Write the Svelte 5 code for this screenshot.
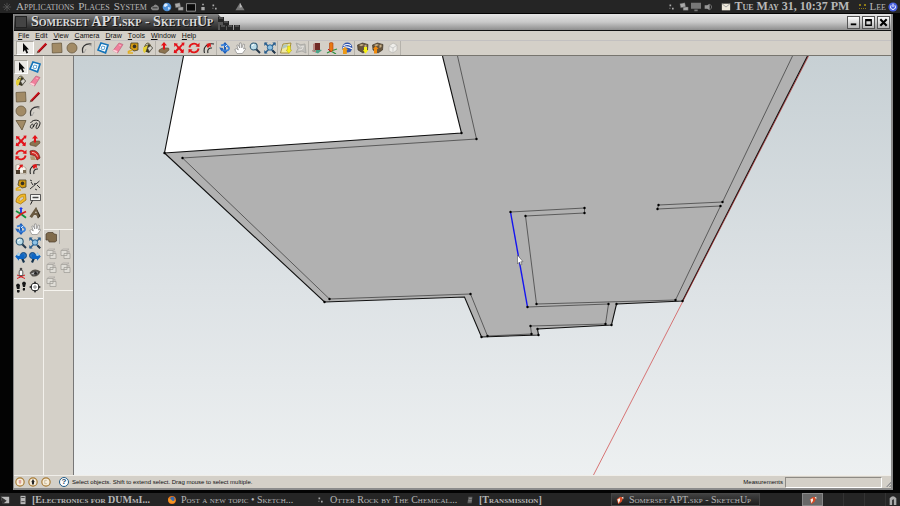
<script>
  const menus = ['File', 'Edit', 'View', 'Camera', 'Draw', 'Tools', 'Window', 'Help'];

  const toolbar = [
    ['select', 'pencil', 'rect', 'circle', 'arc'],
    ['component', 'eraser', 'tape', 'paint'],
    ['pushpull', 'move', 'rotate', 'offset'],
    ['orbit', 'hand', 'zoom', 'extents'],
    ['addloc', 'terrain'],
    ['building', 'place', 'earth'],
    ['getmodel', 'sharemodel', 'ghostbox']
  ];

  const palette = [
    ['select', 'component', 'paint', 'eraser'],
    ['rect', 'pencil', 'circle', 'arc', 'poly', 'freehand'],
    ['move', 'pushpull', 'rotate', 'follow', 'scale', 'offset'],
    ['tape', 'dimension', 'protractor', 'label', 'axes', 'text3d'],
    ['orbit', 'hand', 'zoom', 'extents', 'previous', 'next'],
    ['camera', 'look', 'walk', 'section']
  ];

  const solids = ['solid', 'solid', 'solid', 'solid', 'solid'];

  const tasks = [
    { icon: 'doc', text: '[Electronics for DUMmI...', strong: true },
    { icon: 'firefox', text: 'Post a new topic • Sketch...' },
    { icon: 'dots', text: 'Otter Rock by The Chemical...' },
    { icon: 'trans', text: '[Transmission]', strong: true },
    { icon: 'sketchup', text: 'Somerset APT.skp - SketchUp', active: true }
  ];

  const cubes = [[0, 3], [5, 7], [2, 11], [9, 11], [16, 11]];

  const points = [
    [165, 153], [183, 158], [462, 133], [477, 139], [325, 302], [330, 299], [471, 294],
    [482, 337], [488, 336], [532, 334], [539, 335], [538, 329], [531, 326], [606, 324],
    [612, 325], [609, 304], [617, 304], [537, 304], [528, 307], [511, 212], [526, 216],
    [585, 208], [585, 213], [659, 205], [658, 209], [723, 202], [721, 206], [676, 300], [683, 301]
  ];
</script>

{#snippet icon(name)}
  <svg class="icon" viewBox="0 0 12 12" aria-hidden="true">
    {#if name === 'select'}
      <path d="M4 1v9l2-2 1.5 3.5 1.6-.7L7.6 7.4H10z" fill="#080808" />
    {:else if name === 'pencil'}
      <path d="M2 10.3 10.3 1.6" stroke="#c90d16" stroke-width="2.3" />
      <path d="M3 10 10.5 2.4" stroke="#68151b" stroke-width=".7" />
      <path d="M.6 11.5 1.5 8.8 3.3 10.4z" fill="#6c6150" />
    {:else if name === 'rect'}
      <path d="M1 1.5 10.5 1 11 10.5 1.4 11z" fill="#a28b66" stroke="#6b5c42" stroke-width=".8" />
    {:else if name === 'circle'}
      <circle cx="6" cy="6" r="5" fill="#a28b66" stroke="#6b5c42" stroke-width=".8" />
    {:else if name === 'poly'}
      <path d="M1 1.5h10L7 11z" fill="#a28b66" stroke="#625337" stroke-width=".8" />
    {:else if name === 'arc'}
      <path d="M2 11C0 5 4 1 10.5 2" fill="none" stroke="#333" stroke-width="1.2" />
      <path d="M3 11 5 7M8 3l3 1" stroke="#999" stroke-width=".7" />
    {:else if name === 'freehand'}
      <path d="M1.5 4C4-.5 13 .5 10.6 6 8 12.4 5.8 9.5 8 5.800 9.300 3 6 3 4.800 7c-1 3.400-4.800 2.500-3-.5C3.400 4 5.200 5.500 4 8" fill="none" stroke="#222" />
    {:else if name === 'component'}
      <path d="M4 1 11 3 8.5 10.8 1 8z" fill="#fff" stroke="#1674b8" stroke-width="1.7" />
      <path d="m5 4 3 .7-1 3L4 7z" fill="#fff" stroke="#60a5d3" />
    {:else if name === 'eraser'}
      <path d="M7 1 11 2.5 5.5 11 1 8.5z" fill="#f07f9b" stroke="#b9647c" stroke-width=".7" />
      <path d="M1.5 7.4 5.5 9 5 11 1 9z" fill="#ffd1d9" />
      <path d="m7 3 2 .8" stroke="#ffc3cf" stroke-width=".7" />
    {:else if name === 'paint'}
      <path d="M2 4.5 7 2l4 4-4 5-5-2z" fill="#3a3624" />
      <path d="M1 5.5 6 3 4 9 2.5 11.2 1 9z" fill="#e5cf35" />
      <path d="M3 4C4 0 8 0 9 5" fill="none" stroke="#5e5631" />
      <path d="m5.500 6 3-2 2 2-3 3.500z" fill="#d9d7ce" stroke="#555" stroke-width=".5" />
    {:else if name === 'tape'}
      <path d="M4 1h7v7L7 9 3 6z" fill="#d39a12" stroke="#4a4024" stroke-width=".8" />
      <circle cx="7.5" cy="4.4" r="1.8" fill="#373224" />
      <path d="M5 8 1.5 9.5V11H6" fill="none" stroke="#e0af24" stroke-width="1.6" />
    {:else if name === 'pushpull'}
      <path d="m1 8 3.5-2h6L11 8l-4 3.5L1 10z" fill="#8b7350" stroke="#574731" stroke-width=".6" />
      <path d="M6 0 9 3.5H7V7.5H5V3.5H3z" fill="#e51117" />
    {:else if name === 'move'}
      <path d="m1 1 4 .8-1 1L6 4.7l3-3L8.2.8 11.5.5 11 4l-1-1-2.5 3L9.6 8l1.4-1-.5 4.2L7 10.6l1-1L6 7.5 3.5 10l1 1.2L.7 11l.5-3.6 1 1L4.5 6 2.8 3.6 1.4 5z" fill="#e31019" />
    {:else if name === 'rotate'}
      <path d="M1.4 5.5A4.7 4.7 0 0 1 9.4 3M10.6 6.5A4.7 4.7 0 0 1 2.6 9" fill="none" stroke="#e21518" stroke-width="1.8" />
      <path d="M11.5.7V5L7.5 4.4zM.5 11.3V7l4 .6z" fill="#e21518" />
    {:else if name === 'offset'}
      <path d="M1.5 11C-.2 5 4 .8 11 2M5 11C4 7.5 6 5.6 9 6" fill="none" stroke="#282828" stroke-width="1.1" />
      <path d="m3 2 4.5-1 .6 4-1.5-.8L5 6 3.6 4.5 4.4 3z" fill="#e21518" />
    {:else if name === 'follow'}
      <path d="M1 2c5-2 9 1 10 7l-3 2C7 7 5 6 1.5 6z" fill="#d32c26" stroke="#642018" stroke-width=".7" />
      <path d="M1 7.5 5 7l2 4H2z" fill="#b19a74" />
      <path d="M3 3.5c3 0 4.5 1.5 5.5 4" fill="none" stroke="#ffe2d5" stroke-width=".8" />
    {:else if name === 'scale'}
      <path d="m1 2 4-1 6 4v6L5 10 1 8z" fill="#f5f2eb" stroke="#938774" stroke-width=".6" />
      <path d="M1 7h4v4H1z" fill="#473a2a" />
      <path d="m4 2 4-.6L7.4 5 6.2 4 4 7 3 6l2-3z" fill="#dc1719" />
      <path d="M8 7h3v3H8z" fill="#796b54" />
    {:else if name === 'dimension'}
      <path d="M1 10 10.5 2M2 3l2 3M8 6l3 3M1 1l2 1M6 10l2 1" stroke="#333" fill="none" />
      <path d="M5 4h2v2H5z" fill="#555" />
    {:else if name === 'protractor'}
      <path d="M1 9C1 4 5 .5 10.5 1.2L11 7 5.5 11z" fill="#efb827" stroke="#9d6800" stroke-width=".7" />
      <path d="M3.8 7.5C4.5 5 6 3.8 8.5 3.7v2L5.4 8z" fill="#d4d0c8" stroke="#b17d0c" stroke-width=".5" />
    {:else if name === 'label'}
      <path d="M1.500 1.500h10v6h-10z" fill="#f5f5f2" stroke="#333" stroke-width=".8" />
      <path d="M3.500 4.500h6" stroke="#444" stroke-width="1.500" />
      <path d="M3.500 7.500 1.500 11.500" stroke="#222" />
    {:else if name === 'axes'}
      <path d="M6 7V1" stroke="#1837ed" stroke-width="1.8" />
      <path d="m6 7-5-3M6 7l5 3.800" stroke="#10913b" stroke-width="1.8" />
      <path d="M6 7 1 11M6 7l5-2.500" stroke="#d61b21" stroke-width="1.8" />
      <path d="m4 2 2-2 2 2z" fill="#1837ed" />
    {:else if name === 'text3d'}
      <path d="M7 0 11.500 9 9 11.500 7.500 8H5l3-3z" fill="#2e271d" />
      <path d="M7 0 .5 9.500 3 11l2-3h2.500L9 11.500 10 9 7.500 1z" fill="#6a5a41" />
      <path d="m6 6 1-2 .7 2z" fill="#d4d0c8" />
    {:else if name === 'orbit'}
      <path d="M6 0 8.5 3H7v6h1.4L6 12 3.5 9H5V3H3.5z" fill="#1d5cb4" />
      <path d="M2 3.5C5 2 10.5 4 10 7 9 9.5 4 9 2 7" fill="none" stroke="#3980da" stroke-width="1.8" />
      <path d="m.2 5.5 4 .5-1.4 3.4z" fill="#2866bd" />
      <path d="m6 5 2-2" stroke="#d9e8ff" />
    {:else if name === 'hand'}
      <path d="M3 11.500.8 7.500l1.700-.8L4.300 8 2.800 3.300l1.400-.4L5.800 6l-.2-5 1.500-.1.700 5L9.300 2l1.300.5L9.600 7l1.500-1 .7.800-3.500 4.700z" fill="#fff" stroke="#777" stroke-width=".6" />
    {:else if name === 'zoom'}
      <path d="m7 7 4 4" stroke="#26384a" stroke-width="2" />
      <circle cx="4.7" cy="4.5" r="3.5" fill="#bcdde9" stroke="#2d5874" stroke-width="1.1" />
      <path d="M3 4q.6-1.5 2-1.5" stroke="#fff" fill="none" />
    {:else if name === 'extents'}
      <path d="M1 1 11 11M11 1 1 11" stroke="#2b5f8e" stroke-width="1.500" />
      <path d="M.3.500h3.400L.3 4zM11.700.500H8.300L11.700 4zM.3 11.500h3.400L.3 8z" fill="#2b5f8e" />
      <circle cx="6" cy="5.500" r="2.700" fill="#8fc3e6" stroke="#2b6797" />
      <path d="m8.500 8.500 2.700 2.700" stroke="#26384a" stroke-width="2" />
    {:else if name === 'previous' || name === 'next'}
      <g transform={name === 'next' ? 'translate(12 0) scale(-1 1)' : ''}>
        <path d="m7 7 2 4.500" stroke="#16334d" stroke-width="2.200" />
        <circle cx="8.500" cy="4.500" r="3" fill="#2672c0" stroke="#174a80" />
        <path d="M.2 5.500 4 1.500v2h5V8H4v1.800z" fill="#0d65c4" />
        <circle cx="3.500" cy="3.500" r="1.500" fill="#a9d3ea" />
      </g>
    {:else if name === 'camera'}
      <path d="m2 8 8 3.5M10 8l-8 3.5" stroke="#d71f24" />
      <path d="M4.2 8.5V4.8Q4.2 3 6 3t1.8 1.8v3.7z" fill="#fff" stroke="#333" stroke-width=".8" />
      <circle cx="6" cy="2" r="1.3" fill="#444" />
    {:else if name === 'look'}
      <path d="M.5 6Q5 0 11.5 4.5 9 11 3 9.2z" fill="#55514a" />
      <path d="M2 6q4-3 8-.5-3 4-7 2.2" fill="#bbb" stroke="#222" stroke-width=".7" />
      <circle cx="6.5" cy="6.2" r="1.5" fill="#222" />
    {:else if name === 'walk'}
      <path d="M1 4Q3 1 5 4L4.500 8H2zM2 9h2.600v2Q3 12.500 2 11zM7 2Q9-1 11 2L10 6H8zM8 7h2v2Q9 10.500 7.700 9z" fill="#151515" />
    {:else if name === 'section'}
      <circle cx="6" cy="6" r="4" fill="#fff" stroke="#333" />
      <path d="M6 0 8 3H4zM6 12l2-3H4zM0 6l3-2v4zM12 6 9 4v4z" fill="#333" />
      <path d="M4 6h4M6 4v4" stroke="#888" />
    {:else if name === 'addloc'}
      <path d="m3 2 8-1-2 10H.5z" fill="#f0e8a2" stroke="#947b26" stroke-width=".8" />
      <path d="m3 3 5-1-1 3-5 2z" fill="#b1c6bf" />
      <path d="M7.5 4h3v4h1.3L9 11.5 6 8h1.5z" fill="#f5ef18" stroke="#a79b13" stroke-width=".4" />
    {:else if name === 'terrain'}
      <path d="M1 1q5 3 9 1l1 9-4-2-6 1.5 2-4z" fill="#c0bfbb" stroke="#a5a4a0" stroke-width=".8" />
      <path d="m3 3 2.500 2L8.500 4 7 7.500 3.500 8" fill="none" stroke="#e3e1dc" />
    {:else if name === 'building'}
      <path d="m1 9 4-2 6 1-4 3.5z" fill="#49a286" />
      <path d="M4 1h5v7H4z" fill="#702a25" />
      <path d="m4 1-2 1v6l2 1zM1 8h4v2H2z" fill="#b98a84" />
    {:else if name === 'place'}
      <path d="M5 9 1 11M5 9l6-2M5 9l5 3" stroke="#2e9242" stroke-width="1.3" />
      <path d="M3.5 1Q5 0 7 1v7L5.5 9.8 3.5 8z" fill="#e87812" stroke="#a93c0d" stroke-width=".6" />
      <path d="m2 7 3 3" stroke="#c51a1d" />
    {:else if name === 'earth'}
      <circle cx="6.3" cy="5.6" r="5" fill="#3256ae" />
      <path d="M2.500 3.800q4-2.500 7.500 0M2 6q4-2.500 9 .8" fill="none" stroke="#fff" stroke-width="1.1" />
      <path d="M2 12V8H.8L4 4.800 7 8H5.800v4z" fill="#ed9a16" />
    {:else if name === 'getmodel' || name === 'sharemodel'}
      <path d="m.5 3 5-2L11 2.5 10.5 8 6 11 1 8z" fill="#66543b" stroke="#352b20" stroke-width=".6" />
      <path d="m2 3 3-1 2 1-3 1.3zM7.5 3l2-.5V5l-2 1z" fill="#c4ad85" />
      {#if name === 'getmodel'}
        <path d="M7 5h3v3h1.2L8.5 11.7 6 8h1z" fill="#f6f214" />
      {:else}
        <path d="M2 11.5V7H1l2.7-3L6.5 7H5v4.5z" fill="#f08a0c" />
      {/if}
    {:else if name === 'ghostbox'}
      <path d="m2 4 4-3 4 2v5l-4 3-4-2z" fill="#eeede9" stroke="#b8b6b0" stroke-width=".7" />
      <path d="m2 4 4 2 4-3M6 6v5" fill="none" stroke="#bbb" stroke-width=".7" />
    {:else if name === 'solid'}
      <path d="M2 2.5h6v5H2zM5 5.5h6v5H5z" fill="#dfddd7" stroke="#9b9994" stroke-width=".7" />
      <path d="M2 2.5 4 1h6L8 2.5M8 4l2-1v2.5" fill="none" stroke="#aaa8a3" stroke-width=".7" />
    {:else if name === 'shell'}
      <path d="m1 3 2-1.5h5L9 3l2.5.5V10L10 11H4L3.5 9H1z" fill="#806b4c" stroke="#4c3e2b" stroke-width=".7" />
    {:else if name === 'doc'}
      <path d="M3 1h6v10H3z" fill="#b9b9b9" />
      <path d="M4 3h4M4 8h4" stroke="#333" />
    {:else if name === 'firefox'}
      <circle cx="6" cy="6" r="4.7" fill="#e8731a" />
      <circle cx="6.5" cy="4.7" r="2.6" fill="#346db2" />
      <path d="M1.5 4q3 0 5 3 2 1 4-2-.4 5-5 5T1.5 4" fill="#f49724" />
    {:else if name === 'dots'}
      <path d="M3 3h2v2H3zM6 7h2v2H6zM3 7h1v1H3z" fill="#aaa" />
    {:else if name === 'trans'}
      <path d="M4 2h5l-1 8H3z" fill="#5f5f5f" />
      <path d="M5 4h3M4 7h4" stroke="#999" />
    {:else if name === 'sketchup'}
      <path d="m2 5 4-3 4 1-2 5-4 3z" fill="#d84c27" />
      <path d="m3 5 3-1v3l-2 3zM8 3l2-1v3z" fill="#f3eee5" />
    {:else if name === 'cloud'}
      <path d="M1 8q0-3 3-3 2-4 6 0 2 4-1 5H3z" fill="#858585" />
      <path d="M3 7h6" stroke="#222" />
    {:else if name === 'globe'}
      <circle cx="6" cy="6" r="5.2" fill="#4e91d9" />
      <path d="M3 2q4-1 4 2L4 6 2 5zM7 6l3 1-2 3z" fill="#dceafa" />
    {:else if name === 'cards'}
      <path d="m1 2 6-1 1 5-6 1zM5 6h6v4H5z" fill="#aaa" stroke="#555" stroke-width=".5" />
    {:else if name === 'screen'}
      <path d="M.5 2h11v9H.5z" fill="#0a0a0a" stroke="#aaa" />
    {:else if name === 'bars'}
      <path d="M5 2h2v2H5zM4 6h4v4H4z" fill="#aaa" />
    {:else if name === 'monitor'}
      <path d="M0 1h12v7H0zM4 9h4v2H4z" fill="#777" />
    {:else if name === 'speaker'}
      <path d="M2 4h3l3-2v8L5 8H2z" fill="#999" />
      <path d="M9 3q3 3 0 6" fill="none" stroke="#777" />
    {:else if name === 'mail'}
      <path d="M1 2h10v8H1z" fill="#eee9dc" />
      <path d="m1 2 5 4 5-4" fill="none" stroke="#999" />
    {:else if name === 'power'}
      <circle cx="6" cy="6" r="5.5" fill="#465fe0" />
      <path d="M3.7 4q-2 4 2.3 5 4.3-1 2.3-5M6 2v4" fill="none" stroke="#fff" stroke-width="1.2" />
    {:else if name === 'peak'}
      <path d="M6 1 11.500 10H.5z" fill="#777" />
      <path d="m6 1 2.500 5-3 1z" fill="#bbb" />
    {:else if name === 'burst'}
      <path d="M6 1v10M1 6h10M2.5 2.5l7 7M9.5 2.5l-7 7" stroke="#555" />
    {:else if name === 'desk'}
      <path d="M1 2h10v8H3z" fill="#bbb" />
      <path d="m1 2 7 5-5 4z" fill="#333" />
    {:else if name === 'trash'}
      <path d="M2 12V4q4-5 8 0v8H7V5L5 6v6z" fill="#aaa" />
    {:else if name === 'geo' || name === 'person' || name === 'credit'}
      <circle cx="6" cy="6" r="5" fill="#f7edda" stroke="#a67a35" stroke-width="1.4" />
      {#if name === 'geo'}
        <path d="M4.5 3.5h3v3L6 9 4.5 6.5z" fill="#dfa29a" />
      {:else if name === 'person'}
        <path d="M6 2.5 7.5 5 7 9H5L4.5 5z" fill="#222" />
      {:else}
        <path d="M7 4H4.5v4H7" stroke="#c4b695" fill="none" />
      {/if}
    {/if}
  </svg>
{/snippet}

<div class="desktop">
  <header class="panel top">
    <nav class="panel-menu">
      {@render icon('burst')}
      <a href="#applications">Applications</a>
      <a href="#places">Places</a>
      <a href="#system">System</a>
    </nav>
    <div class="launchers">
      {#each ['cloud', 'globe', 'cards', 'screen', 'bars', 'dots'] as name}{@render icon(name)}{/each}
    </div>
    <div class="peak">{@render icon('peak')}</div>
    <div class="tray">
      {#each ['dots', 'cards', 'monitor', 'speaker'] as name}{@render icon(name)}{/each}
      <span class="mail">{@render icon('mail')}</span>
      <time>Tue May 31, 10:37 PM</time>
      <span class="grip"></span>
      <span>Lee</span>
      {@render icon('power')}
    </div>
  </header>

  <main class="window">
    <div class="titlebar">
      <div class="caption">
        <span class="sysbox"></span>
        <h1>Somerset APT.skp - SketchUp</h1>
      </div>
      <svg class="cubes" viewBox="0 0 28 16" aria-hidden="true">
        <path d="M0 0 8 9 12 16H0z" fill="#555" />
        {#each cubes as [x, y]}
          <rect {x} {y} width="6" height="5" fill="#262626" />
          <path d="M{x + 1} {y + 1}h4" stroke="#777" stroke-width="1" />
        {/each}
      </svg>
      <div class="winbtns">
        <button aria-label="Minimize"><svg viewBox="0 0 12 12"><path d="M3 8h6" stroke="#000" stroke-width="2" /></svg></button>
        <button aria-label="Maximize"><svg viewBox="0 0 12 12"><path d="M3 3h6v6H3zM3 4h6" stroke="#000" stroke-width="1.4" fill="none" /></svg></button>
        <button aria-label="Close"><svg viewBox="0 0 12 12"><path d="m2.5 2.5 7 7M9.5 2.5l-7 7" stroke="#000" stroke-width="2.3" /></svg></button>
      </div>
    </div>

    <nav class="menubar">
      {#each menus as m}<button><u>{m[0]}</u>{m.slice(1)}</button>{/each}
    </nav>

    <div class="toolbar">
      {#each toolbar as group}
        <div class="group">
          {#each group as name}
            <button class:pressed={name === 'select'} aria-label={name}>{@render icon(name)}</button>
          {/each}
        </div>
      {/each}
    </div>

    <div class="work">
      <aside class="palette">
        {#each palette as group}
          <div class="grid">
            {#each group as name}
              <button class:pressed={name === 'select'} aria-label={name}>{@render icon(name)}</button>
            {/each}
          </div>
        {/each}
      </aside>
      <aside class="side">
        <div class="solids">
          <div class="shell"><button aria-label="Outer shell">{@render icon('shell')}</button></div>
          <div class="grid">
            {#each solids as name, i}
              <button aria-label={'Solid tool ' + (i + 1)}>{@render icon(name)}</button>
            {/each}
          </div>
        </div>
      </aside>
      <div class="canvas">
        <svg viewBox="74 56 818 419" preserveAspectRatio="xMidYMid slice" role="img" aria-label="Floor plan model">
          <path d="M184 56 165 153 462 133 443 56z" fill="#fff" />
          <path d="M165 153 325 302 465 297 482 337 539 335 538 329 612 325 617 304 683 301 809 56H443L462 133z" fill="#b1b1b1" />
          <g fill="none" stroke="#444" stroke-width=".8">
            <path d="M458 56 477 139 183 158 330 299 471 294 488 336 532 334 531 326 606 324 609 304 528 307" />
            <path d="M511 212 585 208V213L526 216 537 304 676 300 721 206 658 209 659 205 723 202 793 56" />
          </g>
          <path d="M184 56 165 153 462 133 443 56M165 153 325 302 465 297 482 337 539 335 538 329 612 325 617 304 683 301 808 56" fill="none" stroke="#111" stroke-width="1.1" />
          <path d="M809 56 683 302" stroke="#a02020" stroke-width=".7" />
          <path d="M683 302 594 475" stroke="#d25555" stroke-width=".8" />
          <path d="M511 212 528 307" stroke="#1414f0" stroke-width="1.4" />
          {#each points as [x, y]}<circle cx={x} cy={y} r="1.2" fill="#000" />{/each}
          <path d="M518 255v9l2-2 1 3 1.5-.6-1.200-2.700h2.200z" fill="#fff" stroke="#555" stroke-width=".6" />
        </svg>
      </div>
    </div>

    <footer class="status">
      <div class="badges">{@render icon('geo')}{@render icon('person')}{@render icon('credit')}</div>
      <span class="help">?</span>
      <p>Select objects. Shift to extend select. Drag mouse to select multiple.</p>
      <label for="measure">Measurements</label>
      <input id="measure" type="text" />
      <span class="resize"></span>
    </footer>
  </main>

  <footer class="panel bottom">
    <div class="desk">{@render icon('desk')}</div>
    <div class="tasks">
      {#each tasks as t}
        <button class:active={t.active} class:strong={t.strong}>{@render icon(t.icon)}<span>{t.text}</span></button>
      {/each}
    </div>
    <div class="spaces">
      <span class="current">{@render icon('sketchup')}</span><span></span><span></span><span></span>
    </div>
    <div class="trash">{@render icon('trash')}</div>
  </footer>
</div>

<style>
  :global(body) { margin: 0; background: #000; }
  * { box-sizing: border-box; }
  button { border: 0; padding: 0; margin: 0; background: none; font: inherit; color: inherit; display: flex; align-items: center; justify-content: center; }
  .icon { display: block; width: 12px; height: 12px; flex: none; }
  .desktop { min-height: 100vh; display: flex; flex-direction: column; background: #030303; font-family: "Liberation Sans", sans-serif; }

  .panel { display: flex; align-items: center; background: #252525; color: #b8b8b8; font: small-caps 11px/13px "Liberation Serif", serif; white-space: nowrap; }
  .panel .icon { width: 10px; height: 10px; }
  .top { height: 13px; padding: 0 2px; }
  .panel-menu { display: flex; align-items: center; gap: 4px; width: 148px; }
  .panel-menu a { color: inherit; text-decoration: none; }
  .launchers { display: flex; gap: 2px; width: 85px; }
  .peak { flex: 1; }
  .tray { display: flex; align-items: center; gap: 2px; }
  .mail { margin: 0 2px 0 6px; }
  time { font-size: 12px; font-weight: bold; width: 116px; }
  .grip { width: 7px; height: 5px; margin: 0 2px 0 6px; border: 2px dotted #8d7a16; border-width: 2px 0 1px; }

  .window { flex: 1; display: flex; flex-direction: column; margin: 1px 7px 3px 13px; border: solid #8c8c8c; border-width: 0 2px 2px 1px; background: #d4d0c8; }
  .titlebar { display: flex; height: 17px; background: linear-gradient(#e4e4e4, #c9c9c9 50%, #8e8e8e); border-bottom: 1px solid #111; }
  .caption { display: flex; align-items: center; gap: 4px; width: 204px; padding-left: 1px; background: linear-gradient(#858585, #4c4c4c 50%, #252525); }
  .sysbox { width: 12px; height: 12px; border: 1px solid #222; background: #444; }
  h1 { margin: 0; color: #dcdcdc; font: small-caps bold 14px/16px "Liberation Serif", serif; white-space: nowrap; text-shadow: 1px 1px #111; }
  .cubes { width: 28px; height: 16px; }
  .winbtns { display: flex; gap: 2px; margin-left: auto; padding: 2px 1px; }
  .winbtns button { width: 13px; height: 13px; background: linear-gradient(#fff, #b5b5b5); border: 1px solid #555; }
  .winbtns svg { width: 11px; height: 11px; }

  .menubar { display: flex; gap: 6px; height: 10px; padding-left: 4px; font-size: 7px; line-height: 10px; color: #111; border-bottom: 1px solid #c3c1c1; }
  .toolbar { display: flex; height: 15px; padding-left: 2px; border-bottom: 1px solid #77756f; }
  .group { display: flex; border-right: 1px solid #b5b2ab; }
  .group button { width: 15px; height: 14px; }
  .group .pressed { width: 18px; }
  .pressed { background: #ebe9e5; border: 1px solid #aaa79f; border-right-color: #fff; border-bottom-color: #fff; }

  .work { flex: 1; display: flex; min-height: 0; }
  .palette { display: flex; flex-direction: column; gap: 2px; width: 30px; padding-top: 4px; border-right: 1px solid #f3f1ec; }
  .grid { display: grid; grid-template-columns: 14px 14px; }
  .grid button { height: 14px; }
  .palette .grid:last-child { padding-bottom: 4px; border-bottom: 1px solid #fff; }
  .side { width: 30px; padding-top: 173px; border-right: 1px solid #777; }
  .solids { border: solid #f5f3ee; border-width: 1px 0; padding-bottom: 1px; }
  .shell { width: 16px; border-right: 1px solid #aaa; margin-bottom: 3px; }
  .shell button { width: 14px; height: 14px; }
  .canvas { flex: 1; min-width: 0; display: flex; background: linear-gradient(#c7d0d4, #dde2e5 55%, #edf0f1); }
  .canvas svg { display: block; width: 100%; height: 100%; }

  .status { display: flex; align-items: center; height: 13px; border-top: 1px solid #f0eee9; font-size: 6px; color: #111; white-space: nowrap; }
  .badges { display: flex; gap: 3px; padding-left: 1px; }
  .badges .icon { width: 10px; height: 10px; }
  .help { width: 10px; height: 10px; margin: 0 3px 0 8px; border: 1px solid #235c87; border-radius: 50%; background: #fff; color: #174568; font-size: 8px; font-weight: bold; line-height: 8px; text-align: center; }
  .status p { flex: 1; margin: 0; }
  .status input { width: 97px; height: 11px; margin: 0 4px 0 2px; padding: 0 2px; border: 1px solid #8d8a84; border-right-color: #fff; border-bottom-color: #fff; background: #d4d0c8; font-size: 6px; }
  .resize { width: 5px; height: 10px; background: repeating-linear-gradient(135deg, #d4d0c8 0 1px, #999 1px 2px); clip-path: polygon(100% 40%, 100% 100%, 0 100%); }

  .bottom { height: 13px; font-size: 10px; }
  .desk { width: 15px; }
  .tasks { flex: 1; display: flex; }
  .tasks button { flex: 0 1 149px; min-width: 0; gap: 4px; justify-content: flex-start; padding-left: 3px; font-variant: small-caps; height: 13px; }
  .tasks .strong { font-weight: bold; }
  .tasks .active { background: linear-gradient(#414141, #1d1d1d); border: 1px solid #454545; }
  .spaces { display: flex; }
  .spaces span { width: 21px; height: 13px; border-right: 1px solid #333; display: flex; align-items: center; justify-content: center; }
  .spaces .current { background: #686868; border: 1px solid #888; }
  .trash { padding: 0 2px; }
</style>
